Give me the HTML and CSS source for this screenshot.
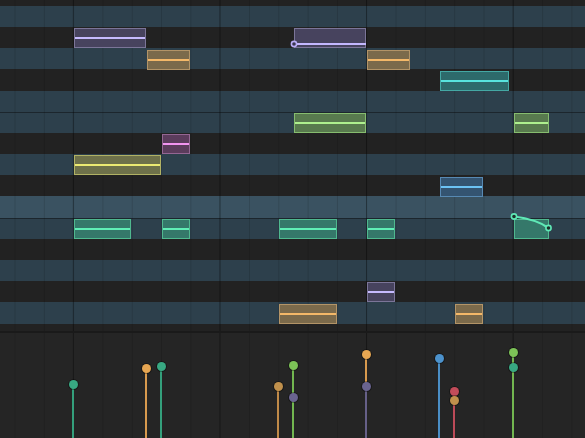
FILE: index.html
```html
<!DOCTYPE html>
<html lang="en">
<head>
    <meta charset="UTF-8" />
    <title>Piano Roll</title>
    <link rel="stylesheet" href="styles.css">
</head>
<body>

    <div class="roll">
        <div class="keys">
            <div class="key black edge-top"></div>
            <div class="key white"></div>
            <div class="key black"></div>
            <div class="key white"></div>
            <div class="key black"></div>
            <div class="key white"></div>
            <div class="key white split"></div>
            <div class="key black"></div>
            <div class="key white"></div>
            <div class="key black"></div>
            <div class="key white root"></div>
            <div class="key white split"></div>
            <div class="key black"></div>
            <div class="key white"></div>
            <div class="key black"></div>
            <div class="key white"></div>
            <div class="key black edge-bottom"></div>
        </div>
        <div class="grid"></div>

        <div class="note purple bent" style="left:294px;top:28px;width:72px"></div>
        <div class="note purple" style="left:74px;top:28px;width:72px"></div>
        <div class="note orange" style="left:147px;top:50px;width:43px"></div>
        <div class="note orange" style="left:367px;top:50px;width:43px"></div>
        <div class="note teal" style="left:440px;top:71px;width:69px"></div>
        <div class="note green" style="left:294px;top:113px;width:72px"></div>
        <div class="note green" style="left:514px;top:113px;width:35px"></div>
        <div class="note pink" style="left:162px;top:134px;width:28px"></div>
        <div class="note yellow" style="left:74px;top:155px;width:87px"></div>
        <div class="note blue" style="left:440px;top:177px;width:43px"></div>
        <div class="note sea" style="left:74px;top:219px;width:57px"></div>
        <div class="note sea" style="left:162px;top:219px;width:28px"></div>
        <div class="note sea" style="left:279px;top:219px;width:58px"></div>
        <div class="note sea" style="left:367px;top:219px;width:28px"></div>
        <div class="note sea glide" style="left:514px;top:219px;width:35px"></div>
        <div class="note purple" style="left:367px;top:282px;width:28px"></div>
        <div class="note orange" style="left:279px;top:304px;width:58px"></div>
        <div class="note orange" style="left:455px;top:304px;width:28px"></div>

        <svg class="bends" width="585" height="331" viewBox="0 0 585 331">
            <line x1="294" y1="44" x2="366" y2="44" stroke="#c4b8ff" stroke-width="2" />
            <circle cx="294" cy="44" r="2.6" fill="#3a3650" stroke="#b8acf6" stroke-width="1.6" />
            <path d="M514 216.5 C 526 218, 539 221, 548.5 228" fill="none" stroke="#5fe8b6" stroke-width="2.2" stroke-linecap="round" />
            <circle cx="514" cy="216.5" r="2.6" fill="#1d2f2a" stroke="#5fe8b6" stroke-width="1.6" />
            <circle cx="548.5" cy="228" r="2.6" fill="#1d2f2a" stroke="#5fe8b6" stroke-width="1.6" />
        </svg>
    </div>

    <!-- velocity lane: top = value offset inside the lane -->
    <div class="velocity">
        <div class="stem sea" style="left:72px;top:51px"></div>
        <div class="dot sea" style="left:68.5px;top:46.5px"></div>

        <div class="stem orange" style="left:145px;top:35px"></div>
        <div class="dot orange" style="left:141.5px;top:30.5px"></div>

        <div class="stem sea" style="left:160px;top:33px"></div>
        <div class="dot sea" style="left:156.5px;top:28.5px"></div>

        <div class="stem brown" style="left:277px;top:53px"></div>
        <div class="dot brown" style="left:273.5px;top:48.5px"></div>

        <div class="stem green" style="left:292px;top:32px"></div>
        <div class="dot green" style="left:288.5px;top:27.5px"></div>
        <div class="dot purple" style="left:288.5px;top:59.5px"></div>

        <div class="stem purple" style="left:365px;top:53px"></div>
        <div class="stem orange" style="left:365px;top:21px;bottom:52px"></div>
        <div class="dot orange" style="left:361.5px;top:16.5px"></div>
        <div class="dot purple" style="left:361.5px;top:48.5px"></div>

        <div class="stem blue" style="left:438px;top:25px"></div>
        <div class="dot blue" style="left:434.5px;top:20.5px"></div>

        <div class="stem red" style="left:453px;top:58px"></div>
        <div class="dot red" style="left:449.5px;top:53.5px"></div>
        <div class="dot brown" style="left:449.5px;top:62.5px"></div>

        <div class="stem green" style="left:512px;top:19px"></div>
        <div class="dot green" style="left:508.5px;top:14.5px"></div>
        <div class="dot sea" style="left:508.5px;top:29.5px"></div>
    </div>

</body>
</html>
```

FILE: styles.css
```css
:root {
    --white-key: #2d404c;
    --root-key: #3a5261;
    --black-key: #222222;
    --panel: #252525;
}

* {
    box-sizing: border-box;
}

html,
body {
    margin: 0;
    height: 438px;
    overflow: hidden;
}

body {
    width: 585px;
    background: var(--panel);
    font-family: 'Liberation Sans', sans-serif;
    display: flex;
    flex-direction: column;
}

.roll {
    position: relative;
    height: 331px;
    flex: none;
    overflow: hidden;
}

.keys {
    display: flex;
    flex-direction: column;
    height: 331px;
}

    .key {
        height: 21.2px;
        flex: none;
    }

        .key.white {
            background: var(--white-key);
        }

        .key.black {
            background: var(--black-key);
        }

        .key.root {
            background: var(--root-key);
        }

        .key.split {
            border-top: 1px solid #1c262d;
        }

        .key.edge-top {
            height: 5.8px;
        }

        .key.edge-bottom {
            flex: 1;
            height: auto;
        }

.grid,
.velocity {
    background-image:
        linear-gradient(to right, rgba(0,0,0,0.32) 1px, transparent 1px),
        linear-gradient(to right, rgba(0,0,0,0.13) 1px, transparent 1px);
    background-size: 146.6px 100%, 29.32px 100%;
    background-position: 72.8px 0, 14.5px 0;
}

.grid {
    position: absolute;
    inset: 0;
}

.velocity {
    position: relative;
    flex: 1;
    border-top: 2px solid #1a1a1a;
    background-color: var(--panel);
    overflow: hidden;
}

/* notes */
.note {
    position: absolute;
    height: 20px;
    border: 1px solid;
}

    .note::after {
        content: "";
        position: absolute;
        left: 0;
        right: 0;
        top: 8px;
        height: 2px;
        background: var(--line);
    }

    .note.bent::after,
    .note.glide::after {
        display: none;
    }

    .note.purple {
        background: #47435e;
        border-color: #7b7598;
        --line: #c6baff;
    }

    .note.orange {
        background: #7b6a4b;
        border-color: #b39467;
        --line: #f4b868;
    }

    .note.teal {
        background: #2d6a6b;
        border-color: #44a8a4;
        --line: #58e4de;
    }

    .note.green {
        background: #587a4e;
        border-color: #86bd6f;
        --line: #aef08e;
    }

    .note.pink {
        background: #5b3c5c;
        border-color: #946693;
        --line: #f294f0;
    }

    .note.yellow {
        background: #6e714a;
        border-color: #b1b264;
        --line: #ecea72;
    }

    .note.blue {
        background: #345471;
        border-color: #5789b3;
        --line: #6cc2f4;
    }

    .note.sea {
        background: #35786a;
        border-color: #4fb88f;
        --line: #60eeb6;
    }

.bends {
    position: absolute;
    left: 0;
    top: 0;
}

/* velocity stems */
.stem,
.dot {
    position: absolute;
}

.stem {
    width: 2px;
    bottom: 0;
}

.dot {
    width: 9px;
    height: 9px;
    border-radius: 50%;
    box-shadow: 0 0 0 1px rgba(0,0,0,0.35);
}

.stem.sea { background: #34a07c; }
.dot.sea { background: #38a882; }

.stem.orange { background: #d89a4e; }
.dot.orange { background: #e6a652; }

.stem.brown { background: #c08a48; }
.dot.brown { background: #c0904c; }

.stem.green { background: #72b650; }
.dot.green { background: #7cc257; }

.stem.purple { background: #666088; }
.dot.purple { background: #6a6490; }

.stem.blue { background: #4a8ec6; }
.dot.blue { background: #4c92cc; }

.stem.red { background: #bc4a58; }
.dot.red { background: #c24c5a; }
```
